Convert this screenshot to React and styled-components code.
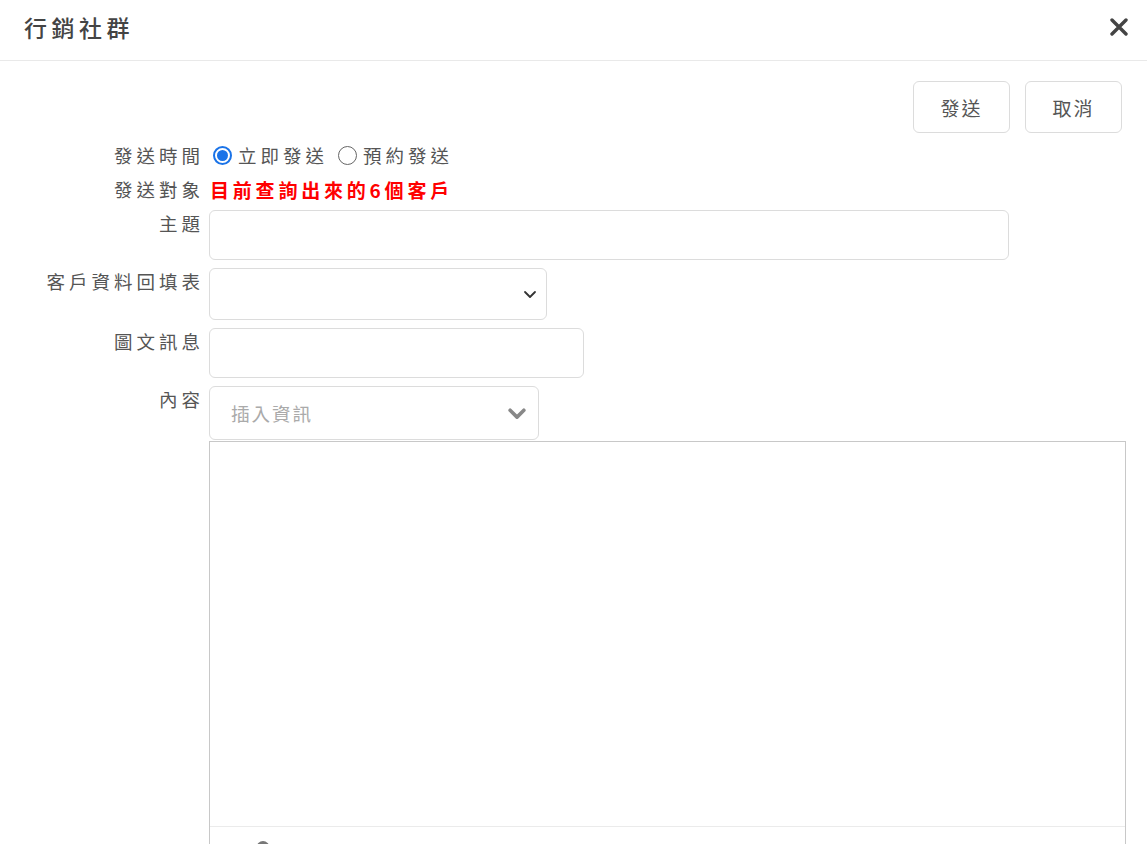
import React from 'react'
import styled, { createGlobalStyle } from 'styled-components'

const GlobalStyle = createGlobalStyle`
  html, body {
    margin: 0;
    padding: 0;
    background: #fff;
    overflow: hidden;
  }
  body {
    font-family: "Noto Sans CJK TC", "Noto Sans", sans-serif;
    color: #555;
  }
`

const Modal = styled.div`
  width: 1147px;
  height: 844px;
  background: #fff;
`

const Header = styled.div`
  height: 61px;
  box-sizing: border-box;
  padding: 0 18px 6px 24px;
  display: flex;
  align-items: center;
  justify-content: space-between;
  border-bottom: 1px solid #e9e9e9;
`

const Title = styled.h1`
  margin: 0;
  font-size: 23px;
  font-weight: 500;
  letter-spacing: 4.5px;
  color: #444;
`

const CloseBtn = styled.button`
  border: 0;
  background: none;
  padding: 0;
  width: 20px;
  height: 20px;
  display: flex;
  align-items: center;
  justify-content: center;
  cursor: pointer;
`

const Body = styled.div`
  padding: 20px 25px 0 0;
`

const Actions = styled.div`
  display: flex;
  justify-content: flex-end;
  gap: 15px;
`

const Button = styled.button`
  width: 97px;
  height: 52px;
  border: 1px solid #dcdcdc;
  border-radius: 6px;
  background: #fff;
  font-family: inherit;
  font-size: 19px;
  letter-spacing: 2px;
  color: #555;
  cursor: pointer;
`

const Form = styled.div`
  margin-top: 9px;
  display: grid;
  grid-template-columns: 204px 1fr;
  column-gap: 5px;
  row-gap: 8px;
  align-items: start;
`

const Label = styled.div`
  text-align: right;
  font-size: 18.5px;
  letter-spacing: 4px;
  line-height: ${p => (p.$inline ? '26px' : '24px')};
  padding-top: ${p => (p.$inline ? '0' : '1px')};
  color: #555;
  white-space: nowrap;
`

const Inline = styled.div`
  display: flex;
  align-items: center;
  height: 26px;
`

const RadioLabel = styled.label`
  display: flex;
  align-items: center;
  font-size: 18.5px;
  letter-spacing: 4px;
  color: #555;
  margin-right: 6px;
  cursor: pointer;
`

const RadioDot = styled.span`
  width: 19px;
  height: 19px;
  box-sizing: border-box;
  border-radius: 50%;
  margin: 0 6px 0 4px;
  border: ${p => (p.$on ? '2px solid #1a73e8' : '1.6px solid #666')};
  display: flex;
  align-items: center;
  justify-content: center;
  &::after {
    content: '';
    display: ${p => (p.$on ? 'block' : 'none')};
    width: 11px;
    height: 11px;
    border-radius: 50%;
    background: #1a73e8;
  }
`

const Target = styled.span`
  margin-left: 1px;
  font-size: 19px;
  font-weight: 700;
  letter-spacing: 3.8px;
  color: #f00;
`

const TextInput = styled.input`
  box-sizing: border-box;
  width: ${p => p.$w}px;
  height: 50px;
  border: 1px solid #dcdcdc;
  border-radius: 6px;
  padding: 0 12px;
  font-family: inherit;
  font-size: 18px;
  outline: none;
`

const SelectBox = styled.div`
  box-sizing: border-box;
  width: ${p => p.$w}px;
  height: ${p => p.$h}px;
  border: 1px solid #dcdcdc;
  border-radius: 6px;
  display: flex;
  align-items: center;
  justify-content: space-between;
  padding: 0 ${p => p.$pr}px 0 21px;
  background: #fff;
`

const Placeholder = styled.span`
  font-size: 18.5px;
  letter-spacing: 2px;
  color: #aaa;
`

const ContentCol = styled.div`
  display: flex;
  flex-direction: column;
`

const Editor = styled.div`
  box-sizing: border-box;
  width: 917px;
  border: 1px solid #c8c8c8;
  margin-top: 1px;
`

const EditArea = styled.div`
  height: 384px;
  border-bottom: 1px solid #ebebeb;
`

const Toolbar = styled.div`
  height: 44px;
  display: flex;
  align-items: flex-start;
  gap: 14px;
  padding: 14px 0 0 45px;
  box-sizing: border-box;
`

const Chevron = ({ size, color, width }) => (
  <svg width={size} height={size} viewBox="0 0 16 16" fill="none">
    <path d="M3 6l5 5 5-5" stroke={color} strokeWidth={width} strokeLinecap="round" strokeLinejoin="round" />
  </svg>
)

export default function App() {
  return (
    <>
      <GlobalStyle />
      <Modal>
        <Header>
          <Title>行銷社群</Title>
          <CloseBtn aria-label="close">
            <svg width="18" height="18" viewBox="0 0 18 18">
              <path d="M2 2l14 14M16 2L2 16" stroke="#444" strokeWidth="3.4" strokeLinecap="round" />
            </svg>
          </CloseBtn>
        </Header>
        <Body>
          <Actions>
            <Button>發送</Button>
            <Button>取消</Button>
          </Actions>
          <Form>
            <Label $inline>發送時間</Label>
            <Inline>
              <RadioLabel>
                <RadioDot $on />立即發送
              </RadioLabel>
              <RadioLabel>
                <RadioDot />預約發送
              </RadioLabel>
            </Inline>

            <Label $inline>發送對象</Label>
            <Inline>
              <Target>目前查詢出來的6個客戶</Target>
            </Inline>

            <Label>主題</Label>
            <TextInput $w={800} />

            <Label>客戶資料回填表</Label>
            <SelectBox $w={338} $h={52} $pr={8}>
              <span />
              <Chevron size={16} color="#333" width={1.8} />
            </SelectBox>

            <Label>圖文訊息</Label>
            <TextInput $w={375} />

            <Label>內容</Label>
            <ContentCol>
              <SelectBox $w={330} $h={54} $pr={10}>
                <Placeholder>插入資訊</Placeholder>
                <Chevron size={22} color="#888" width={2.6} />
              </SelectBox>
              <Editor>
                <EditArea />
                <Toolbar>
                  <svg width="16" height="20" viewBox="0 0 16 20">
                    <circle cx="8" cy="6.5" r="6.5" fill="#777" />
                    <path d="M0 20c0-4 3-6 8-6s8 2 8 6z" fill="#777" />
                  </svg>
                </Toolbar>
              </Editor>
            </ContentCol>
          </Form>
        </Body>
      </Modal>
    </>
  )
}
